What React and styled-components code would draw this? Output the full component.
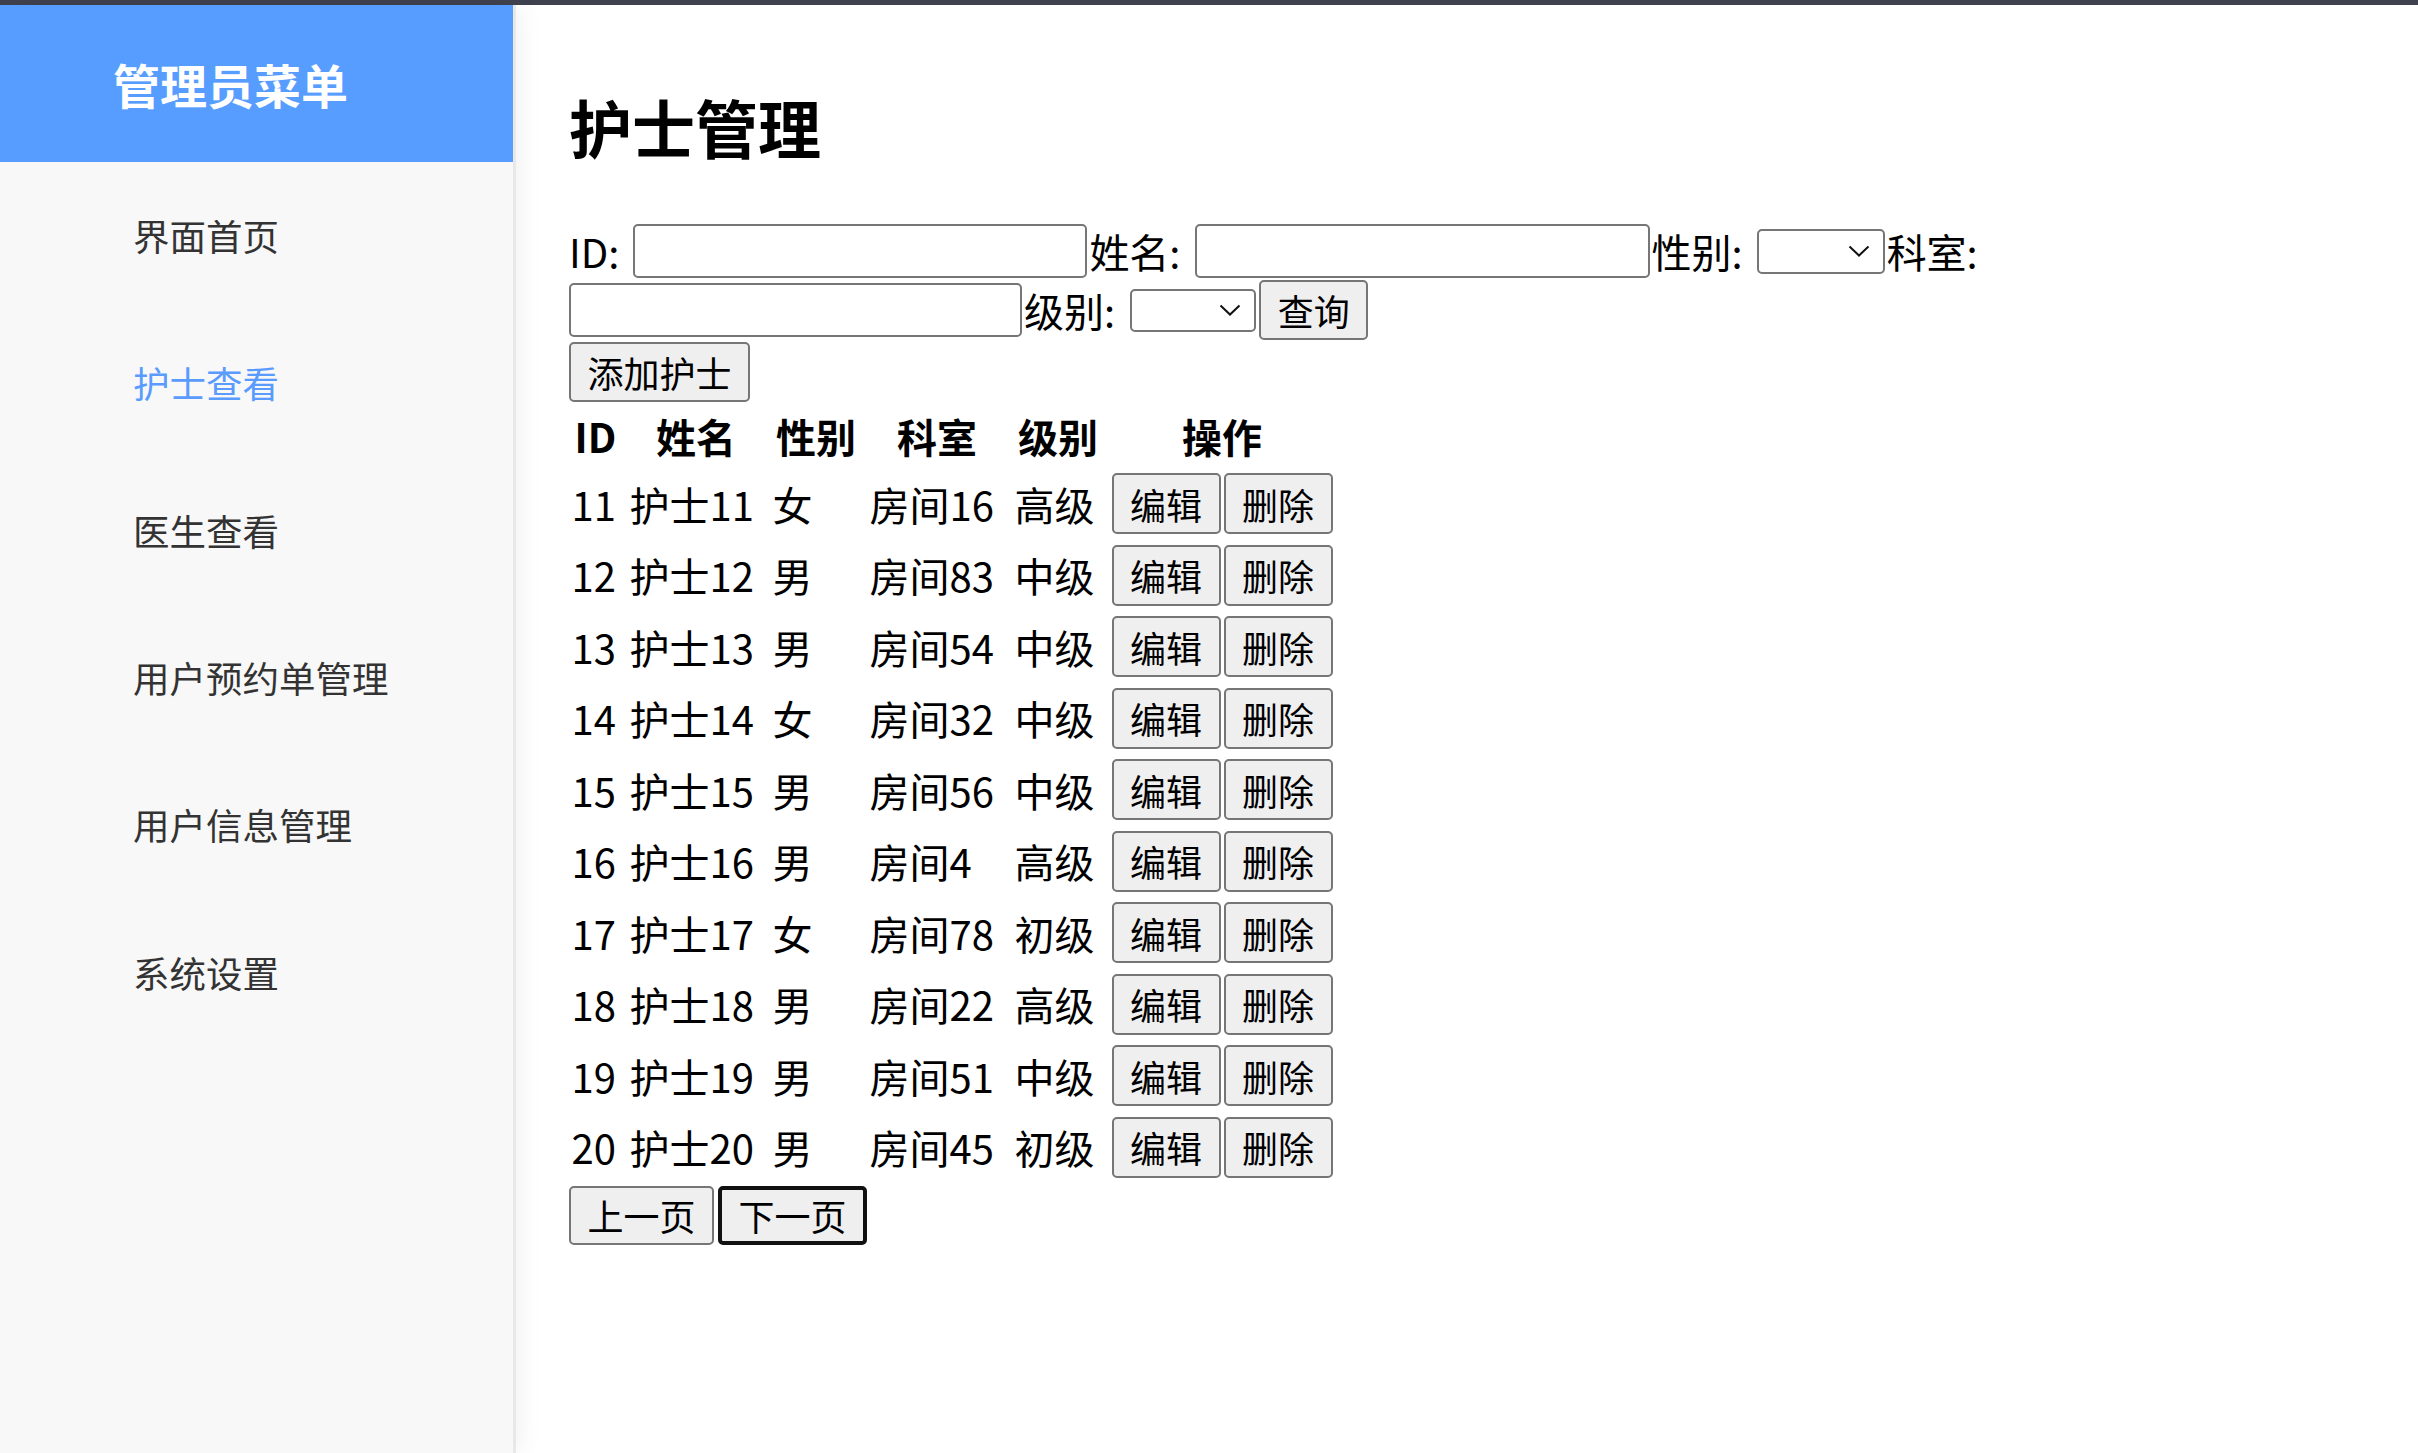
import React from 'react';
import styled, { createGlobalStyle } from 'styled-components';

const GlobalStyle = createGlobalStyle`
  html, body {
    margin: 0;
    padding: 0;
    background: #fff;
  }
  body {
    font-family: "Noto Sans CJK SC", "Noto Sans", sans-serif;
    color: #000;
  }
  * {
    box-sizing: border-box;
  }
`;

const TopBar = styled.div`
  height: 5px;
  background: #3f424e;
`;

const Layout = styled.div`
  display: flex;
  min-height: calc(100vh - 5px);
`;

const Sidebar = styled.aside`
  width: 516px;
  flex-shrink: 0;
  background: #f8f8f8;
  border-right: 3px solid #e8e8e8;
  box-shadow: 6px 0 22px rgba(0, 0, 0, 0.05);
  position: relative;
  z-index: 1;
`;

const SidebarHeader = styled.div`
  height: 157px;
  background: #579dff;
  display: flex;
  align-items: center;
  padding-left: 113px;
  color: #fff;
  font-size: 47px;
  font-weight: 700;
`;

const Menu = styled.nav`
  display: flex;
  flex-direction: column;
`;

const MenuItem = styled.a`
  height: 147.3px;
  display: flex;
  align-items: center;
  padding-left: 133px;
  font-size: 36.5px;
  color: ${(p) => (p.$active ? '#5a9bff' : '#333')};
  text-decoration: none;
  cursor: pointer;
`;

const Main = styled.main`
  flex: 1;
  padding: 81px 0 0 53px;
`;

const Title = styled.h1`
  margin: 0 0 56.5px;
  font-size: 63px;
  line-height: 80px;
  font-weight: 700;
`;

const FilterRow = styled.div`
  display: flex;
  align-items: center;
  height: ${(p) => p.$height}px;
  font-size: 40px;
  line-height: 50px;
`;

const Label = styled.span`
  margin-right: ${(p) => (p.$gap ?? 14)}px;
  white-space: nowrap;
`;

const TextInput = styled.input`
  width: ${(p) => p.$w}px;
  height: 54px;
  border: 2.5px solid #767676;
  border-radius: 5px;
  background: #fff;
  margin-right: 2px;
  font-size: 30px;
  padding: 0 6px;
  outline: none;
`;

const SelectWrap = styled.span`
  position: relative;
  display: inline-flex;
  margin-right: ${(p) => (p.$mr ?? 2)}px;

  svg {
    position: absolute;
    right: 15px;
    top: 50%;
    transform: translateY(-50%);
    pointer-events: none;
  }
`;

const Select = styled.select`
  appearance: none;
  width: ${(p) => p.$w}px;
  height: ${(p) => p.$h}px;
  border: 2.5px solid #767676;
  border-radius: 5px;
  background: #fff;
  font-size: 30px;
  outline: none;
`;

const Button = styled.button`
  height: ${(p) => p.$h || 60}px;
  padding: 0 16.5px;
  font-family: "Noto Sans CJK SC", sans-serif;
  font-size: 36px;
  line-height: 1;
  color: #000;
  background: #efefef;
  border: ${(p) => (p.$focused ? '4.5px solid #111' : '2.5px solid #767676')};
  border-radius: 5px;
  cursor: pointer;
  white-space: nowrap;
`;

const AddRow = styled.div`
  margin-top: 1px;
  display: flex;
`;

const Table = styled.table`
  border-collapse: separate;
  border-spacing: 5px;
  margin-left: -5px;
  font-size: 40px;
`;

const Th = styled.th`
  padding: 2.5px;
  height: 59px;
  width: ${(p) => (p.$w ? `${p.$w}px` : 'auto')};
  font-weight: 700;
  text-align: center;
  line-height: 54px;
  white-space: nowrap;
`;

const Td = styled.td`
  padding: 2.5px;
  height: 66.5px;
  text-align: left;
  vertical-align: middle;
  line-height: 54px;
  white-space: nowrap;
`;

const Actions = styled.div`
  display: flex;
  gap: 3px;
`;

const Pager = styled.div`
  display: flex;
  gap: 4px;
`;

const Chevron = () => (
  <svg width="22" height="12" viewBox="0 0 22 12" fill="none">
    <path d="M1.5 1.5 L11 10.5 L20.5 1.5" stroke="#111" strokeWidth="2" />
  </svg>
);

const menu = ['界面首页', '护士查看', '医生查看', '用户预约单管理', '用户信息管理', '系统设置'];

const nurses = [
  [11, '女', 16, '高级'],
  [12, '男', 83, '中级'],
  [13, '男', 54, '中级'],
  [14, '女', 32, '中级'],
  [15, '男', 56, '中级'],
  [16, '男', 4, '高级'],
  [17, '女', 78, '初级'],
  [18, '男', 22, '高级'],
  [19, '男', 51, '中级'],
  [20, '男', 45, '初级'],
];

export default function App() {
  return (
    <>
      <GlobalStyle />
      <TopBar />
      <Layout>
        <Sidebar>
          <SidebarHeader>管理员菜单</SidebarHeader>
          <Menu>
            {menu.map((m) => (
              <MenuItem key={m} $active={m === '护士查看'}>
                {m}
              </MenuItem>
            ))}
          </Menu>
        </Sidebar>
        <Main>
          <Title>护士管理</Title>
          <FilterRow $height={57}>
            <Label>ID:</Label>
            <TextInput $w={454} />
            <Label>姓名:</Label>
            <TextInput $w={455} />
            <Label>性别:</Label>
            <SelectWrap>
              <Select $w={128} $h={45}>
                <option></option>
              </Select>
              <Chevron />
            </SelectWrap>
            <Label $gap={0}>科室:</Label>
          </FilterRow>
          <FilterRow $height={61}>
            <TextInput $w={453} />
            <Label $gap={15}>级别:</Label>
            <SelectWrap $mr={3}>
              <Select $w={126} $h={43}>
                <option></option>
              </Select>
              <Chevron />
            </SelectWrap>
            <Button $h={60}>查询</Button>
          </FilterRow>
          <AddRow>
            <Button $h={60}>添加护士</Button>
          </AddRow>
          <Table>
            <thead>
              <tr>
                <Th $w={53}>ID</Th>
                <Th $w={138}>姓名</Th>
                <Th $w={92}>性别</Th>
                <Th $w={140}>科室</Th>
                <Th $w={92}>级别</Th>
                <Th>操作</Th>
              </tr>
            </thead>
            <tbody>
              {nurses.map(([id, sex, room, level]) => (
                <tr key={id}>
                  <Td>{id}</Td>
                  <Td>护士{id}</Td>
                  <Td>{sex}</Td>
                  <Td>房间{room}</Td>
                  <Td>{level}</Td>
                  <Td>
                    <Actions>
                      <Button $h={61}>编辑</Button>
                      <Button $h={61}>删除</Button>
                    </Actions>
                  </Td>
                </tr>
              ))}
            </tbody>
          </Table>
          <Pager>
            <Button $h={59}>上一页</Button>
            <Button $h={59} $focused>
              下一页
            </Button>
          </Pager>
        </Main>
      </Layout>
    </>
  );
}
